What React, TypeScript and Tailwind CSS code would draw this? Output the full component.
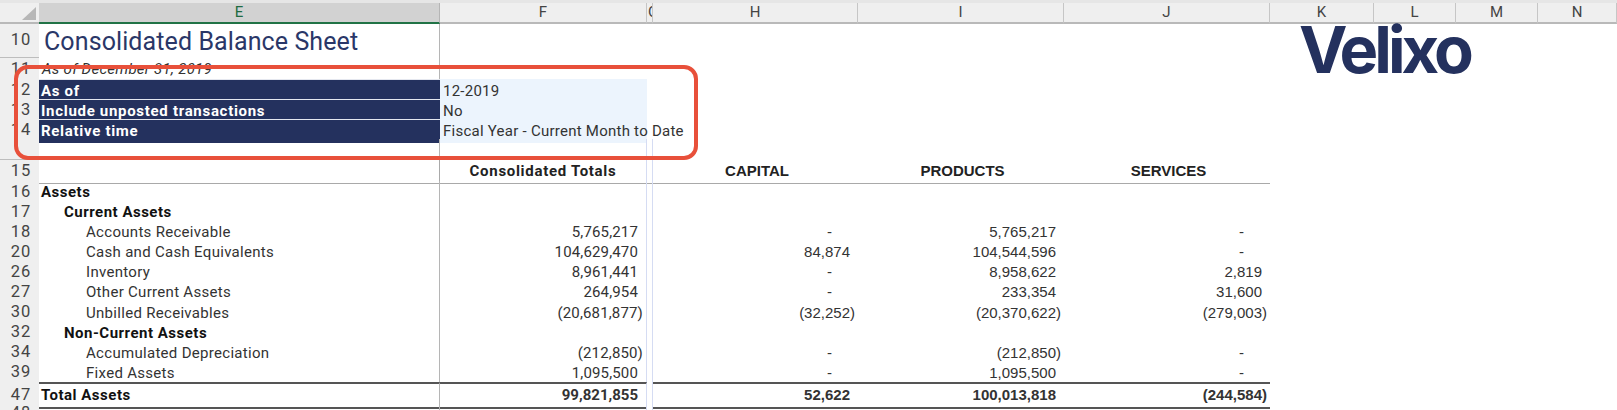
const grid =
  'grid grid-cols-[39px_401px_207px_6px_205px_206px_206px_104px_82px_82px_79px]'
const aptos = 'font-[Roboto,sans-serif]'
const arial = "font-['Liberation_Sans',Arial,sans-serif]"

const columns = ['E', 'F', 'G', 'H', 'I', 'J', 'K', 'L', 'M', 'N']

interface DataRow {
  num: string
  label: string
  indent?: 0 | 1 | 2
  bold?: boolean
  gap?: boolean
  values?: string[]
}

const rows: DataRow[] = [
  { num: '16', label: 'Assets', bold: true },
  { num: '17', label: 'Current Assets', indent: 1, bold: true },
  { num: '18', label: 'Accounts Receivable', indent: 2, values: ['5,765,217', '-', '5,765,217', '-'] },
  { num: '20', label: 'Cash and Cash Equivalents', indent: 2, gap: true, values: ['104,629,470', '84,874', '104,544,596', '-'] },
  { num: '26', label: 'Inventory', indent: 2, gap: true, values: ['8,961,441', '-', '8,958,622', '2,819'] },
  { num: '27', label: 'Other Current Assets', indent: 2, values: ['264,954', '-', '233,354', '31,600'] },
  { num: '30', label: 'Unbilled Receivables', indent: 2, gap: true, values: ['(20,681,877)', '(32,252)', '(20,370,622)', '(279,003)'] },
  { num: '32', label: 'Non-Current Assets', indent: 1, bold: true, gap: true },
  { num: '34', label: 'Accumulated Depreciation', indent: 2, gap: true, values: ['(212,850)', '-', '(212,850)', '-'] },
  { num: '39', label: 'Fixed Assets', indent: 2, gap: true, values: ['1,095,500', '-', '1,095,500', '-'] },
]

function RowNum({ children, gap }: { children?: string; gap?: boolean }) {
  return (
    <div
      className={`flex items-center justify-end pr-[8px] bg-[#efefef] text-[#444] text-[16.5px] tracking-[0.8px] leading-none border-b border-[#bdbdbd] ${aptos} ${gap ? 'border-b-2' : ''}`}
    >
      {children}
    </div>
  )
}

// right aligned number, closing bracket hangs out past the digits
function Num({ value, font, bold }: { value?: string; font: string; bold?: boolean }) {
  const isNeg = value?.endsWith(')')
  const isDash = value === '-'
  return (
    <div
      className={`h-full flex items-center justify-end whitespace-nowrap text-[15px] pb-[1px] text-[#333] ${font} ${bold ? 'font-bold text-[#111]' : ''} ${isNeg ? 'pr-[3px]' : isDash ? 'pr-[26px]' : 'pr-[8px]'}`}
    >
      {value}
    </div>
  )
}

function Gutters() {
  return <div className="border-r border-[#d5dcf3]" />
}

export default function App() {
  return (
    <div className="relative w-[1617px] h-[410px] overflow-hidden bg-white pt-[3px]">
      <div className="absolute inset-x-0 top-0 h-[3px] bg-[#e6e6e6]" />

      {/* column headers */}
      <div className={`${grid} h-[21px] ${aptos} text-[15px] leading-none text-[#444]`}>
        <div className="relative bg-[#efefef] border-b-2 border-[#b9b9b9]">
          <svg className="absolute left-[22px] top-[4px]" width="14" height="13" viewBox="0 0 14 13">
            <path d="M14 0V13H0Z" fill="#b7b7b7" />
          </svg>
        </div>
        {columns.map((c) => (
          <div
            key={c}
            className={`flex items-center overflow-hidden border-b-2 border-r ${c === 'G' ? 'justify-start pl-[1px]' : 'justify-center'} ${
              c === 'E'
                ? 'bg-[#d2d2d2] text-[#1e6b41] border-b-[#217346] border-r-[#b5b5b5]'
                : 'bg-[#efefef] border-b-[#b9b9b9] border-r-[#c6c6c6]'
            }`}
          >
            {c}
          </div>
        ))}
      </div>

      {/* title */}
      <div className={`${grid} h-[34px]`}>
        <RowNum>10</RowNum>
        <div className={`border-r border-[#b5b5b5] pl-[5px] pt-[2px] text-[25px] tracking-[0.1px] leading-[31px] text-[#2a3768] whitespace-nowrap ${aptos}`}>
          Consolidated Balance Sheet
        </div>
      </div>
      <div className={`${grid} h-[21px]`}>
        <RowNum>11</RowNum>
        <div className={`border-r border-[#b5b5b5] pl-[3px] flex items-center italic text-[15px] tracking-[0.3px] text-[#333] whitespace-nowrap ${aptos}`}>
          As of December 31, 2019
        </div>
      </div>

      {/* report options */}
      {[
        ['12', 'As of', '12-2019'],
        ['13', 'Include unposted transactions', 'No'],
        ['14', 'Relative time', 'Fiscal Year - Current Month to Date'],
      ].map(([num, label, value]) => (
        <div key={num} className={`${grid} h-[20px]`}>
          <RowNum>{num}</RowNum>
          <div className={`bg-[#24315e] border-t border-[#e4e7ef] pl-[2px] flex items-center text-white font-bold text-[15px] tracking-[0.7px] whitespace-nowrap ${aptos}`}>
            {label}
          </div>
          <div className={`bg-[#ecf4fd] pl-[3px] flex items-center text-[15px] tracking-[0.25px] text-[#333] whitespace-nowrap ${aptos}`}>
            {value}
          </div>
        </div>
      ))}

      <div className={`${grid} h-[21px]`}>
        <RowNum />
        <div className="border-r border-[#b5b5b5]" />
        <Gutters />
        <Gutters />
      </div>

      {/* column captions */}
      <div className={`${grid} h-[21px]`}>
        <RowNum>15</RowNum>
        <div className="border-r border-b border-[#a9a9a9]" />
        <div className={`flex items-center justify-center border-b border-r border-b-[#a9a9a9] border-r-[#d5dcf3] font-bold text-[15px] tracking-[0.7px] text-[#222] ${aptos}`}>
          Consolidated Totals
        </div>
        <div className="border-r border-b border-b-[#a9a9a9] border-r-[#d5dcf3]" />
        {['CAPITAL', 'PRODUCTS', 'SERVICES'].map((c) => (
          <div key={c} className={`flex items-center justify-center pl-[3px] border-b border-[#a9a9a9] font-bold text-[15px] text-[#222] ${arial}`}>
            {c}
          </div>
        ))}
      </div>

      {rows.map((r) => (
        <div key={r.num} className={`${grid} h-[20.1px]`}>
          <RowNum gap={r.gap}>{r.num}</RowNum>
          <div
            className={`border-r border-[#b5b5b5] flex items-center pb-[1px] whitespace-nowrap text-[15px] ${aptos} ${
              r.bold ? 'font-bold tracking-[0.5px] text-[#111]' : 'tracking-[0.3px] text-[#333]'
            } ${r.indent === 2 ? 'pl-[47px]' : r.indent === 1 ? 'pl-[25px]' : 'pl-[2px]'}`}
          >
            {r.label}
          </div>
          <div className="border-r border-[#d5dcf3] tracking-[0.15px]">
            <Num value={r.values?.[0]} font={aptos} />
          </div>
          <Gutters />
          {[1, 2, 3].map((i) => (
            <Num key={i} value={r.values?.[i]} font={arial} />
          ))}
        </div>
      ))}

      {/* total */}
      <div className={`${grid} h-[22px]`}>
        <RowNum>47</RowNum>
        <div className={`border-y-2 border-r border-y-[#555] border-r-[#b5b5b5] pl-[2px] flex items-center pb-[1px] font-bold text-[15px] tracking-[0.5px] text-[#111] ${aptos}`}>
          Total Assets
        </div>
        <div className="border-y-2 border-y-[#555] border-r border-r-[#d5dcf3]">
          <Num value="99,821,855" font={aptos} bold />
        </div>
        <Gutters />
        {['52,622', '100,013,818', '(244,584)'].map((v) => (
          <div key={v} className="border-y-2 border-[#555]">
            <Num value={v} font={arial} bold />
          </div>
        ))}
      </div>
      <div className={`${grid} h-[20px]`}>
        <RowNum>48</RowNum>
        <div className="border-r border-[#b5b5b5]" />
        <Gutters />
        <Gutters />
      </div>

      {/* logo and callout sit over the sheet */}
      <div className="absolute left-[1299px] top-[26px] font-[Inter,sans-serif] font-bold text-[65px] leading-[48px] tracking-[-4px] text-[#24315e]">
        Velixo
      </div>
      <div className="absolute left-[14px] top-[65px] w-[684px] h-[95px] border-4 border-[#e8503a] rounded-[14px]" />
    </div>
  )
}
